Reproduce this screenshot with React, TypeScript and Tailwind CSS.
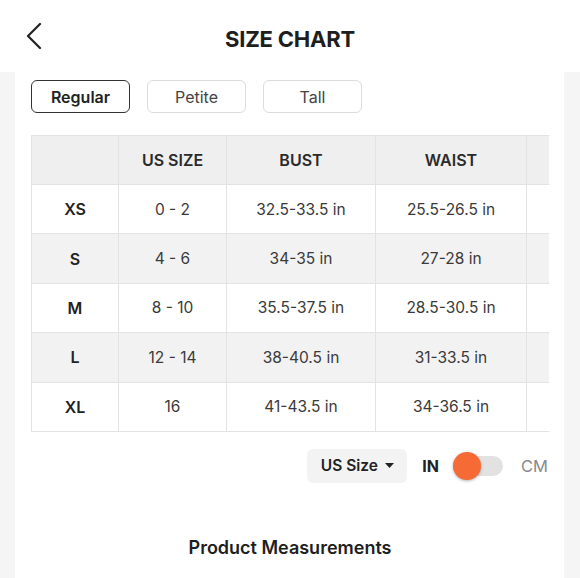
import React from "react";

const rows = [
  { s: "XS", us: "0 - 2", bust: "32.5-33.5 in", waist: "25.5-26.5 in", alt: false },
  { s: "S", us: "4 - 6", bust: "34-35 in", waist: "27-28 in", alt: true },
  { s: "M", us: "8 - 10", bust: "35.5-37.5 in", waist: "28.5-30.5 in", alt: false },
  { s: "L", us: "12 - 14", bust: "38-40.5 in", waist: "31-33.5 in", alt: true },
  { s: "XL", us: "16", bust: "41-43.5 in", waist: "34-36.5 in", alt: false },
];

export default function App() {
  return (
    <div className="w-[580px] h-[578px] overflow-hidden bg-[#f5f5f5] font-['Inter',sans-serif] text-[#222]">
      <header className="h-[72px] bg-white grid grid-cols-[1fr_auto_1fr] items-center">
        <div className="pl-[26px] flex items-center">
          <svg width="16" height="26" viewBox="0 0 16 26" fill="none">
            <polyline points="14,1 2,13 14,25" stroke="#222" strokeWidth="2.2" strokeLinecap="round" strokeLinejoin="round" />
          </svg>
        </div>
        <h1 className="text-[22px] font-bold tracking-[-0.2px] text-[#1e1e1e] leading-none pt-[6px]">SIZE CHART</h1>
        <div />
      </header>
      <div className="pl-[15px] pr-[16px] h-[506px]">
        <div className="bg-white h-full pt-[8px] pl-[16px] pr-[15px]">
          <div className="flex gap-[17px]">
            <button className="w-[99px] h-[33px] rounded-[6px] border-[1.5px] border-[#333] text-[16px] font-semibold text-[#222]">Regular</button>
            <button className="w-[99px] h-[33px] rounded-[6px] border border-[#dcdcdc] text-[16px] text-[#444]">Petite</button>
            <button className="w-[99px] h-[33px] rounded-[6px] border border-[#dcdcdc] text-[16px] text-[#444]">Tall</button>
          </div>
          <div className="mt-[22px] w-[518px] overflow-hidden">
            <table className="border-collapse table-fixed w-[640px] text-[15.5px]">
              <colgroup>
                <col className="w-[87px]" />
                <col className="w-[108px]" />
                <col className="w-[149px]" />
                <col className="w-[151px]" />
                <col className="w-[145px]" />
              </colgroup>
              <thead>
                <tr className="bg-[#efefef] h-[49px]">
                  <th className="border border-[#e3e3e3]"></th>
                  <th className="border border-[#e3e3e3] font-semibold text-[16px] text-[#2a2a2a]">US SIZE</th>
                  <th className="border border-[#e3e3e3] font-semibold text-[16px] text-[#2a2a2a]">BUST</th>
                  <th className="border border-[#e3e3e3] font-semibold text-[16px] text-[#2a2a2a]">WAIST</th>
                  <th className="border border-[#e3e3e3]"></th>
                </tr>
              </thead>
              <tbody>
                {rows.map((r) => (
                  <tr key={r.s} className={`h-[49.4px] ${r.alt ? "bg-[#f2f2f2]" : "bg-white"}`}>
                    <td className="border border-[#e3e3e3] text-center font-semibold text-[16px] text-[#222]">{r.s}</td>
                    <td className="border border-[#e3e3e3] text-center text-[#3a3a3a]">{r.us}</td>
                    <td className="border border-[#e3e3e3] text-center text-[#3a3a3a]">{r.bust}</td>
                    <td className="border border-[#e3e3e3] text-center text-[#3a3a3a]">{r.waist}</td>
                    <td className="border border-[#e3e3e3]"></td>
                  </tr>
                ))}
              </tbody>
            </table>
          </div>
          <div className="mt-[17px] flex items-center justify-end">
            <button className="w-[100px] h-[34px] rounded-[6px] bg-[#f3f3f3] flex items-center justify-center gap-[7px] text-[15.5px] font-semibold text-[#222]">
              US Size
              <svg width="9" height="6" viewBox="0 0 9 6"><polygon points="0,0 9,0 4.5,5" fill="#222" /></svg>
            </button>
            <span className="ml-[15px] text-[16px] font-bold text-[#222]">IN</span>
            <div className="ml-[14px] w-[50px] h-[20px] rounded-full bg-[#e2e2e2] flex items-center">
              <div className="w-[28px] h-[28px] rounded-full bg-[#f56a35] shadow-[0_1px_3px_rgba(0,0,0,0.3)]" />
            </div>
            <span className="ml-[18px] mr-[1px] text-[16.5px] text-[#8a8a8a]">CM</span>
          </div>
          <h2 className="mt-[51px] text-center text-[18px] font-semibold text-[#1e1e1e]">Product Measurements</h2>
        </div>
      </div>
    </div>
  );
}
